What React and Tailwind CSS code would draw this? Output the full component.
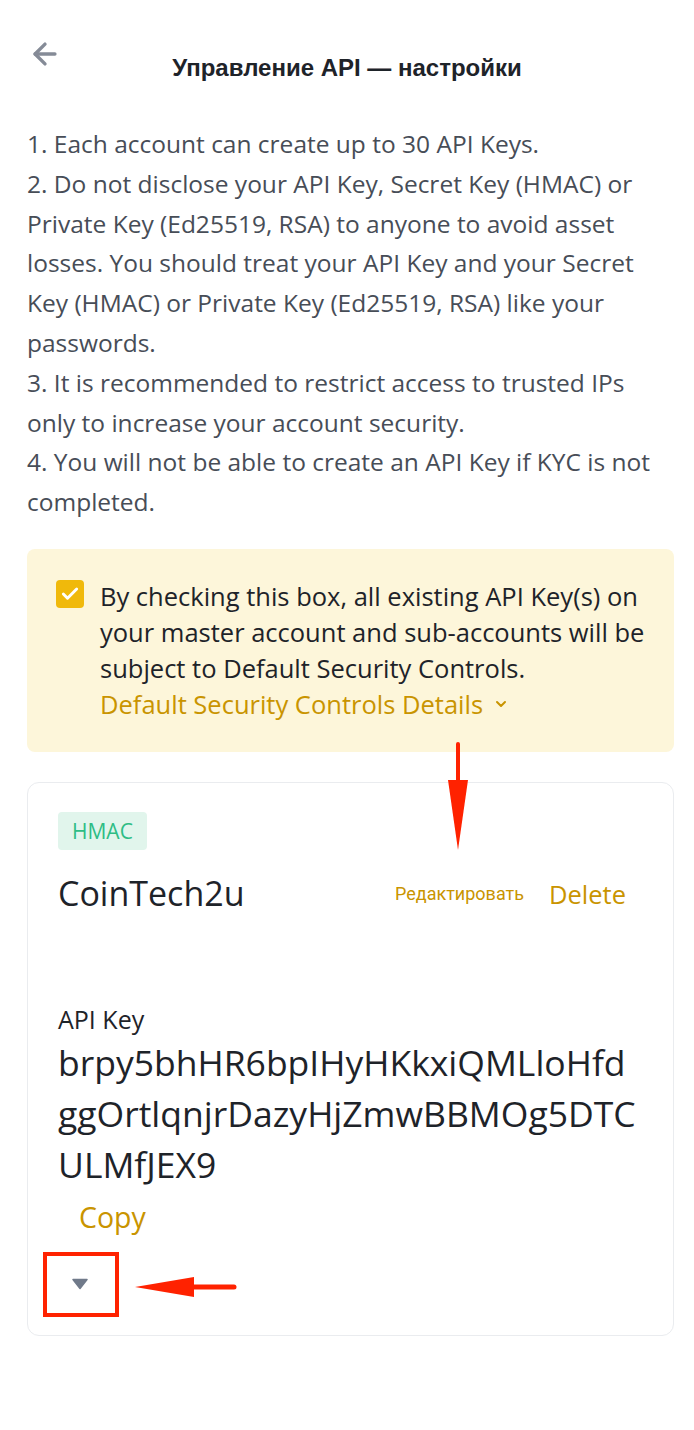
import { ArrowLeft, ChevronDown, Check } from 'lucide-react'

const notes = [
  '1. Each account can create up to 30 API Keys.',
  '2. Do not disclose your API Key, Secret Key (HMAC) or',
  'Private Key (Ed25519, RSA) to anyone to avoid asset',
  'losses. You should treat your API Key and your Secret',
  'Key (HMAC) or Private Key (Ed25519, RSA) like your',
  'passwords.',
  '3. It is recommended to restrict access to trusted IPs',
  'only to increase your account security.',
  '4. You will not be able to create an API Key if KYC is not',
  'completed.',
]

const keyLines = ['brpy5bhHR6bpIHyHKkxiQMLloHfd', 'ggOrtlqnjrDazyHjZmwBBMOg5DTC', 'ULMfJEX9']

export default function App() {
  return (
    <div className="relative w-[694px] min-h-[1430px] bg-white font-['Open_Sans',sans-serif]">
      {/* Header */}
      <div className="relative h-[124px] px-[28px] pt-[37px]">
        <ArrowLeft size={34} strokeWidth={2.4} className="text-[#858b97]" />
        <h1 className="absolute left-0 right-0 top-[53px] text-center text-[24px] leading-[30px] font-bold text-[#1e2329] font-['Liberation_Sans',sans-serif]">
          Управление API — настройки
        </h1>
      </div>

      {/* Notes */}
      <div className="px-[27px] text-[24.5px] leading-[39.8px] text-[#474d57] whitespace-nowrap">
        {notes.map(n => (
          <p key={n}>{n}</p>
        ))}
      </div>

      {/* Security controls */}
      <div className="ml-[27px] mr-[20px] mt-[27px] h-[203px] rounded-[8px] bg-[#fdf6da] pl-[29px] pt-[31px] flex gap-[16px]">
        <div className="w-[28px] h-[28px] shrink-0 rounded-[4px] bg-[#f0b90b] flex items-center justify-center">
          <Check size={20} strokeWidth={3.5} className="text-white" />
        </div>
        <div className="-mt-[2px] text-[25.5px] leading-[36px] font-medium text-[#1e2329] whitespace-nowrap">
          <p>By checking this box, all existing API Key(s) on</p>
          <p>your master account and sub-accounts will be</p>
          <p>subject to Default Security Controls.</p>
          <p className="flex items-center gap-[10px] text-[#c99400]">
            Default Security Controls Details
            <ChevronDown size={16} strokeWidth={3} />
          </p>
        </div>
      </div>

      {/* API key card */}
      <div className="ml-[27px] mr-[20px] mt-[30px] h-[554px] rounded-[12px] border border-[#eaecef] px-[30px] pt-[29px]">
        <span className="inline-block rounded-[4px] bg-[#e1f5ec] px-[14px] py-[6px] text-[21px] leading-[26px] font-medium text-[#2ebd85]">
          HMAC
        </span>
        <div className="mt-[24px] flex items-center h-[40px]">
          <span className="flex-1 text-[34px] font-medium text-[#1e2329]">CoinTech2u</span>
          <span className="text-[18px] text-[#c99400] font-['Roboto',sans-serif]">Редактировать</span>
          <span className="ml-[25px] mr-[17px] text-[25.5px] font-medium text-[#c99400]">Delete</span>
        </div>
        <p className="mt-[90px] text-[25px] leading-[30px] text-[#1e2329]">API Key</p>
        <div className="mt-[3px] text-[35.5px] leading-[51px] font-medium text-[#1e2329] whitespace-nowrap">
          {keyLines.map(k => (
            <p key={k}>{k}</p>
          ))}
        </div>
        <p className="mt-[9px] pl-[21px] text-[28.5px] leading-[36px] font-medium text-[#c99400]">Copy</p>
        <div className="mt-[43px] ml-[13px] w-[18px] h-[12px]">
          <svg width="18" height="12" viewBox="0 0 18 12">
            <path d="M2 1.5h14l-7 9z" fill="#707a8a" stroke="#707a8a" strokeWidth="1.5" strokeLinejoin="round" />
          </svg>
        </div>
      </div>

      {/* Annotations */}
      <div className="absolute left-[43px] top-[1252px] w-[76px] h-[65px] border-[4px] border-[#ff2200]" />
      <svg className="absolute left-[440px] top-[740px]" width="36" height="114" viewBox="0 0 36 114">
        <line x1="18" y1="4" x2="18" y2="70" stroke="#ff2200" strokeWidth="4" strokeLinecap="round" />
        <path d="M8 40 L28 40 L18 110 Z" fill="#ff2200" />
      </svg>
      <svg className="absolute left-[130px] top-[1270px]" width="110" height="36" viewBox="0 0 110 36">
        <line x1="40" y1="17" x2="104" y2="17" stroke="#ff2200" strokeWidth="5" strokeLinecap="round" />
        <path d="M5 17 L64 7 L64 27 Z" fill="#ff2200" />
      </svg>
    </div>
  )
}
